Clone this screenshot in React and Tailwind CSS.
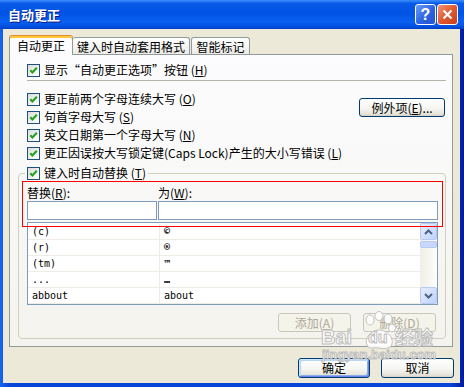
import React from 'react'

const CJK = "font-['Noto_Sans_CJK_SC','Noto_Sans',sans-serif]"

function M({ c }) {
  return (
    <>
      {' '}(<span className="underline underline-offset-[1px]">{c}</span>)
    </>
  )
}

function Check() {
  return (
    <span className="w-[13px] h-[13px] shrink-0 border border-[#1c5180] bg-[linear-gradient(135deg,#dcdcd7,#ffffff)] flex items-center justify-center">
      <svg width="11" height="11" viewBox="0 0 11 11">
        <path d="M2.3 5.2 L4.4 7.4 L8.8 2.8" fill="none" stroke="#21a121" strokeWidth="2.1" />
      </svg>
    </span>
  )
}

function CheckRow({ children }) {
  return (
    <div className="h-[18px] flex items-center gap-[4px] leading-[14px] whitespace-nowrap">
      <Check />
      <span>{children}</span>
    </div>
  )
}

function XpButton({ children, className = '', def = false, disabled = false }) {
  const look = disabled
    ? 'border-[#c9c7ba] bg-[#f5f4ea] text-[#aca899]'
    : 'border-[#003c74] bg-[linear-gradient(to_bottom,#ffffff,#f5f5f1_55%,#e6e4da_88%,#d6d0c5)] text-black'
  const ring = def
    ? 'shadow-[inset_1px_1px_0_#cee7ff,inset_-1px_-1px_0_#6982ee,inset_2px_2px_0_#bcd4f6,inset_-2px_-2px_0_#89ade4]'
    : ''
  return (
    <button className={`flex items-center justify-center rounded-[3px] border leading-[14px] ${look} ${ring} ${className}`}>
      {children}
    </button>
  )
}

function Arrow({ up }) {
  return (
    <svg width="9" height="6" viewBox="0 0 9 6">
      <path d={up ? 'M1 5 L4.5 1.5 L8 5' : 'M1 1 L4.5 4.5 L8 1'} fill="none" stroke="#4d6185" strokeWidth="2" />
    </svg>
  )
}

function ScrollBtn({ up }) {
  return (
    <div className="h-[17px] shrink-0 rounded-[2px] border border-[#b7caf5] bg-[linear-gradient(135deg,#e6eefe,#bfd2fb)] flex items-center justify-center">
      <Arrow up={up} />
    </div>
  )
}

const rows = [
  ['(c)', '©', true],
  ['(r)', '®', true],
  ['(tm)', '™', true],
  ['...', '…', true],
  ['abbout', 'about', false],
]

function TitleBar() {
  return (
    <div className="h-[29px] shrink-0 flex items-center pl-[8px] pr-[6px] bg-[linear-gradient(to_bottom,#3d8ffc_0%,#0a5ae8_12%,#0053e4_45%,#0a60f0_75%,#0352e2_90%,#0040c6_100%)]">
      <span className="flex-1 text-white font-bold text-[13px] [text-shadow:1px_1px_#0a1883]">自动更正</span>
      <div className="flex gap-[1px]">
        <div className="w-[21px] h-[21px] rounded-[3px] border border-white bg-[linear-gradient(135deg,#6b9cf8,#2d62e0_55%,#2353d2)] flex items-center justify-center">
          <span className="text-white font-bold text-[16px] leading-none font-['Liberation_Sans',sans-serif]">?</span>
        </div>
        <div className="w-[21px] h-[21px] rounded-[3px] border border-white bg-[linear-gradient(135deg,#f0957a,#e2582f_50%,#c7401c)] flex items-center justify-center">
          <svg width="11" height="11" viewBox="0 0 11 11">
            <path d="M1.5 1.5 L9.5 9.5 M9.5 1.5 L1.5 9.5" stroke="#ffffff" strokeWidth="2.2" />
          </svg>
        </div>
      </div>
    </div>
  )
}

function Watermark() {
  const stroke = '[-webkit-text-stroke:1px_#b9b9b9]'
  return (
    <div className="absolute left-[315px] top-[282px] w-[122px] h-[56px] pointer-events-none opacity-90 font-['Liberation_Sans',sans-serif]">
      <svg className="absolute left-[44px] top-[0px]" width="34" height="40" viewBox="0 0 34 40">
        <g fill="#ffffff" stroke="#bdbdbd" strokeWidth="1">
          <ellipse cx="8" cy="9" rx="4" ry="5" />
          <ellipse cx="17" cy="5" rx="4" ry="4.5" />
          <ellipse cx="26" cy="8" rx="4" ry="5" />
          <ellipse cx="30" cy="17" rx="3.5" ry="4" />
          <path d="M5 34 C2 28 8 20 16 19 C24 18 32 26 30 33 C29 38 22 38 17 37 C11 36 7 39 5 34 Z" />
        </g>
      </svg>
      <span className={`absolute left-[3px] top-[16px] text-[20px] font-bold text-white leading-none ${stroke}`}>Bai</span>
      <span className={`absolute left-[50px] top-[19px] text-[16px] font-bold text-white leading-none ${stroke}`}>du</span>
      <span className={`absolute left-[77px] top-[16px] text-[19px] font-bold text-white leading-none ${CJK} ${stroke}`}>经验</span>
      <span className={`absolute left-[4px] top-[37px] text-[13px] font-bold text-white leading-none ${stroke}`}>jingyan.baidu.com</span>
    </div>
  )
}

export default function App() {
  return (
    <div className={`w-[464px] h-[387px] flex flex-col overflow-hidden bg-[linear-gradient(to_right,#1766f0,#0846d8_2%,#0846d8_97%,#001a9c)] text-[12px] text-black ${CJK}`}>
      <TitleBar />
      <div className="flex-1 ml-[3px] mr-[4px] mb-[4px] bg-[#ece9d8] flex flex-col relative">
        {/* tabs */}
        <div className="mt-[6px] ml-[6px] h-[19px] flex items-end">
          <div className="relative z-10 w-[64px] h-[20px] -mb-px rounded-t-[3px] border border-b-0 border-[#919b9c] border-t-[#e68b2c] shadow-[inset_0_2px_0_#ffc83c] bg-[#fcfcfe] flex items-center justify-center pt-[1px] leading-[14px]">
            自动更正
          </div>
          <div className="w-[117px] h-[17px] rounded-t-[3px] border border-b-0 border-l-0 border-[#919b9c] bg-[linear-gradient(to_bottom,#ffffff,#ecebe6)] flex items-center justify-center pt-[2px] leading-[14px]">
            键入时自动套用格式
          </div>
          <div className="ml-[1px] w-[59px] h-[17px] rounded-t-[3px] border border-b-0 border-[#919b9c] bg-[linear-gradient(to_bottom,#ffffff,#ecebe6)] flex items-center justify-center pt-[2px] leading-[14px]">
            智能标记
          </div>
        </div>

        {/* tab panel */}
        <div className="ml-[6px] w-[444px] h-[293px] border border-[#919b9c] bg-[linear-gradient(to_bottom,#fcfcfe,#f4f3ee)] pl-[8px] pr-[6px] pt-[6px] flex flex-col">
          <div className="pl-[9px]">
            <CheckRow>显示“自动更正选项”按钮<M c="H" /></CheckRow>
          </div>
          <div className="ml-[9px] mt-[1px] h-px bg-[#b5b3a8]" />

          <div className="flex mt-[9px] pl-[9px]">
            <div className="flex-1 flex flex-col">
              <CheckRow>更正前两个字母连续大写<M c="O" /></CheckRow>
              <CheckRow>句首字母大写<M c="S" /></CheckRow>
              <CheckRow>英文日期第一个字母大写<M c="N" /></CheckRow>
              <CheckRow>更正因误按大写锁定键(Caps Lock)产生的大小写错误<M c="L" /></CheckRow>
            </div>
            <XpButton className="mt-[8px] mr-[1px] w-[86px] h-[19px] shrink-0">
              例外项(<span className="underline underline-offset-[1px]">E</span>)...
            </XpButton>
          </div>

          <fieldset className="relative mt-[2px] border border-[#d0d0bf] rounded-[4px] pl-[8px] pr-[7px] pt-[3px] pb-[6px] min-w-0">
            <legend className="-ml-[2px] px-[2px]">
              <CheckRow>键入时自动替换<M c="T" /></CheckRow>
            </legend>

            <div className="flex h-[16px] items-center leading-[14px]">
              <span className="w-[131px]">替换(<span className="underline underline-offset-[1px]">R</span>):</span>
              <span>为(<span className="underline underline-offset-[1px]">W</span>):</span>
            </div>
            <div className="flex gap-[1px]">
              <input readOnly className="w-[130px] h-[19px] border border-[#7f9db9] bg-white outline-none" />
              <input readOnly className="flex-1 h-[19px] border border-[#7f9db9] bg-white outline-none" />
            </div>

            <div className="mt-[2px] h-[83px] border border-[#7f9db9] bg-white flex">
              <div className="flex-1 pt-[1px] font-['DejaVu_Sans_Mono','Liberation_Mono',monospace] text-[10px]">
                {rows.map(([a, b, sym]) => (
                  <div key={a} className="flex h-[16px] border-b border-[#eeede5]">
                    <div className="w-[132px] border-r border-[#eeede5] pl-[4px] flex items-center">{a}</div>
                    <div className={`flex-1 pl-[4px] flex items-center ${sym ? 'font-bold' : ''}`}>{b}</div>
                  </div>
                ))}
              </div>
              <div className="w-[17px] flex flex-col bg-[linear-gradient(to_right,#efeee7,#fdfdfa)]">
                <ScrollBtn up />
                <div className="mt-[1px] h-[7px] rounded-[2px] border border-[#b7caf5] bg-[#c8d7fb]" />
                <div className="flex-1" />
                <ScrollBtn />
              </div>
            </div>

            <div className="flex justify-end gap-[12px] mt-[8px] pr-[2px]">
              <XpButton disabled className="w-[73px] h-[19px]">
                添加(<span className="underline underline-offset-[1px]">A</span>)
              </XpButton>
              <XpButton disabled className="w-[73px] h-[19px]">
                删除(<span className="underline underline-offset-[1px]">D</span>)
              </XpButton>
            </div>

            {/* annotation box */}
            <div className="absolute left-[3px] -top-[1px] w-[421px] h-[46px] border border-[#ff0000] pointer-events-none" />
          </fieldset>
        </div>

        <div className="flex justify-end gap-[11px] mt-[11px] pr-[6px]">
          <XpButton def className="w-[72px] h-[20px]">确定</XpButton>
          <XpButton className="w-[73px] h-[20px]">取消</XpButton>
        </div>

        <Watermark />
      </div>
    </div>
  )
}
